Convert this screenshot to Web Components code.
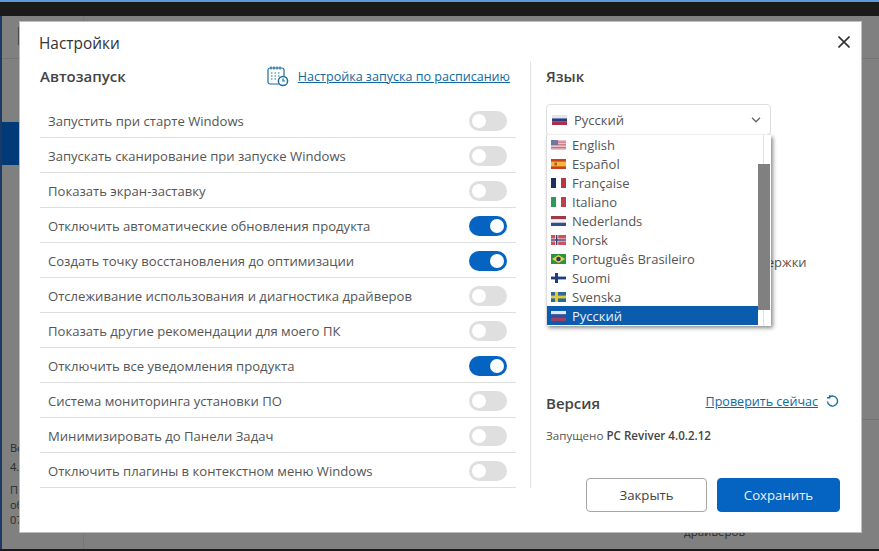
<!DOCTYPE html>
<html lang="ru">
<head>
<meta charset="utf-8">
<title>Настройки</title>
<style>
  html, body { margin: 0; height: 100%; overflow: hidden; }
  body { font-family: "Open Sans", "Noto Sans", sans-serif; color: #444; background: #808080; }
</style>
</head>
<body>
<settings-screen></settings-screen>

<script>
const FLAGS = {
  ru: '<rect width="15" height="3.4" fill="#e4e4ec"/><rect y="3.4" width="15" height="3.3" fill="#2b3a80"/><rect y="6.7" width="15" height="3.3" fill="#a8324a"/>',
  en: '<rect width="15" height="10" fill="#e8c4c8"/><rect y="1.5" width="15" height="1.2" fill="#c7707c"/><rect y="4.2" width="15" height="1.2" fill="#c7707c"/><rect y="7" width="15" height="1.4" fill="#c7707c"/><rect width="7" height="5" fill="#6d78a8"/>',
  es: '<rect width="15" height="10" fill="#c9401f"/><rect y="2.6" width="15" height="4.8" fill="#f0b93a"/><rect x="3.5" y="3.6" width="2.4" height="2.8" fill="#b5522a"/>',
  fr: '<rect width="5" height="10" fill="#1c2f5e"/><rect x="5" width="5" height="10" fill="#fff"/><rect x="10" width="5" height="10" fill="#b53645"/>',
  it: '<rect width="5" height="10" fill="#2f9a56"/><rect x="5" width="5" height="10" fill="#fff"/><rect x="10" width="5" height="10" fill="#b9414c"/>',
  nl: '<rect width="15" height="3.4" fill="#9a3a4c"/><rect y="3.4" width="15" height="3.3" fill="#f2f2f2"/><rect y="6.7" width="15" height="3.3" fill="#34508c"/>',
  no: '<rect width="15" height="10" fill="#d2505c"/><rect x="4.2" width="3" height="10" fill="#eee"/><rect y="3.5" width="15" height="3" fill="#eee"/><rect x="5" width="1.4" height="10" fill="#3a3f7a"/><rect y="4.3" width="15" height="1.4" fill="#3a3f7a"/>',
  br: '<rect width="15" height="10" fill="#2c9440"/><polygon points="7.5,1 14,5 7.5,9 1,5" fill="#e8d44a"/><circle cx="7.5" cy="5" r="2.3" fill="#27346e"/>',
  fi: '<rect width="15" height="10" fill="#fff"/><rect x="4" width="3" height="10" fill="#1f3d78"/><rect y="3.6" width="15" height="2.8" fill="#1f3d78"/>',
  se: '<rect width="15" height="10" fill="#2c6a94"/><rect x="4" width="3" height="10" fill="#e4c93e"/><rect y="3.6" width="15" height="2.8" fill="#e4c93e"/>',
  ruOn: '<rect width="15" height="3.4" fill="#dfe6f4"/><rect y="3.4" width="15" height="3.3" fill="#3a4a94"/><rect y="6.7" width="15" height="3.3" fill="#a04060"/>'
};

class FlagIcon extends HTMLElement {
  connectedCallback() {
    const root = this.shadowRoot || this.attachShadow({ mode: 'open' });
    const code = this.getAttribute('code');
    root.innerHTML = `
      <style>
        :host { display: block; width: 15px; height: 10px; flex: none; }
        svg { display: block; }
      </style>
      <svg width="15" height="10" viewBox="0 0 15 10">${FLAGS[code]}</svg>
    `;
  }
}
customElements.define('flag-icon', FlagIcon);

class ToggleSwitch extends HTMLElement {
  connectedCallback() {
    const root = this.attachShadow({ mode: 'open' });
    root.innerHTML = `
      <style>
        :host { display: block; width: 38px; height: 20px; flex: none; }
        .track {
          box-sizing: border-box;
          display: flex;
          align-items: center;
          width: 100%;
          height: 100%;
          padding: 0 3px;
          border-radius: 10px;
          background: #dfdfdf;
        }
        .knob { width: 14px; height: 14px; border-radius: 50%; background: #fff; }
        :host([on]) .track { background: #0563c1; justify-content: flex-end; }
      </style>
      <div class="track"><div class="knob"></div></div>
    `;
  }
}
customElements.define('toggle-switch', ToggleSwitch);

class SettingRow extends HTMLElement {
  connectedCallback() {
    const root = this.attachShadow({ mode: 'open' });
    const on = this.hasAttribute('on') ? 'on' : '';
    root.innerHTML = `
      <style>
        :host {
          box-sizing: border-box;
          display: flex;
          align-items: center;
          justify-content: space-between;
          height: 35px;
          padding: 1px 9px 0 8px;
          border-bottom: 1px solid #dfdfdf;
          font-size: 13.1px;
          color: #555;
        }
      </style>
      <slot></slot>
      <toggle-switch ${on}></toggle-switch>
    `;
  }
}
customElements.define('setting-row', SettingRow);

class LangSelect extends HTMLElement {
  connectedCallback() {
    const root = this.attachShadow({ mode: 'open' });
    const langs = [
      ['en', 'English'], ['es', 'Español'], ['fr', 'Française'], ['it', 'Italiano'],
      ['nl', 'Nederlands'], ['no', 'Norsk'], ['br', 'Português Brasileiro'],
      ['fi', 'Suomi'], ['se', 'Svenska'], ['ruOn', 'Русский']
    ];
    const items = langs.map(([code, name]) => `
      <div class="item ${code === 'ruOn' ? 'active' : ''}">
        <flag-icon code="${code}"></flag-icon><span>${name}</span>
      </div>`).join('');
    root.innerHTML = `
      <style>
        :host { display: block; position: relative; width: 225px; font-size: 13px; color: #555; }
        .box {
          box-sizing: border-box;
          display: flex;
          align-items: center;
          gap: 7px;
          height: 32px;
          padding: 0 9px 0 5px;
          background: #fff;
          border: 1px solid #dedede;
          border-radius: 4px;
        }
        .box span { flex: 1; }
        .list {
          position: absolute;
          z-index: 2;
          left: 0;
          top: 31px;
          box-sizing: border-box;
          display: flex;
          width: 225px;
          height: 191px;
          background: #fff;
          border-left: 1px solid #ddd;
          box-shadow: 2px 2px 4px rgba(0,0,0,.45);
        }
        .items { flex: 1; }
        .item {
          display: flex;
          align-items: center;
          gap: 6px;
          height: 19px;
          padding-left: 4px;
        }
        .item.active { background: #0b5cad; color: #e8f0fa; }
        .bar {
          width: 13px;
          padding-top: 29px;
          box-sizing: border-box;
          background: linear-gradient(90deg, #fff 5px, #e0e0e0 5px, #e0e0e0 6px, #fff 6px);
        }
        .thumb { width: 12px; height: 146px; background: #808080; }
      </style>
      <div class="box">
        <flag-icon code="ru"></flag-icon><span>Русский</span>
        <svg width="10" height="6" viewBox="0 0 10 6" fill="none" stroke="#666" stroke-width="1.3"><path d="M1 .8 5 4.8 9 .8"/></svg>
      </div>
      <div class="list">
        <div class="items">${items}</div>
        <div class="bar"><div class="thumb"></div></div>
      </div>
    `;
  }
}
customElements.define('lang-select', LangSelect);

class SettingsDialog extends HTMLElement {
  connectedCallback() {
    const root = this.attachShadow({ mode: 'open' });
    const rows = [
      ['Запустить при старте Windows', 0],
      ['Запускать сканирование при запуске Windows', 0],
      ['Показать экран-заставку', 0],
      ['Отключить автоматические обновления продукта', 1],
      ['Создать точку восстановления до оптимизации', 1],
      ['Отслеживание использования и диагностика драйверов', 0],
      ['Показать другие рекомендации для моего ПК', 0],
      ['Отключить все уведомления продукта', 1],
      ['Система мониторинга установки ПО', 0],
      ['Минимизировать до Панели Задач', 0],
      ['Отключить плагины в контекстном меню Windows', 0]
    ].map(([t, on]) => `<setting-row ${on ? 'on' : ''}>${t}</setting-row>`).join('');
    root.innerHTML = `
      <style>
        :host {
          position: absolute;
          left: 20px;
          top: 22px;
          box-sizing: border-box;
          display: flex;
          flex-direction: column;
          width: 841px;
          height: 510px;
          padding: 0 21px 0 20px;
          background: #fff;
          box-shadow: 0 0 0 1px #bdbdbd;
          font-family: "Open Sans", "Noto Sans", sans-serif;
        }
        header {
          display: flex;
          align-items: center;
          justify-content: space-between;
          height: 40px;
        }
        h1 { margin: 2px 0 0 -1px; font-size: 15.4px; font-weight: 400; color: #333; }
        .close { display: block; margin-right: -10px; }
        .cols { display: flex; height: 450px; }
        .left { box-sizing: border-box; width: 476px; }
        .divider { width: 1px; height: 426px; margin: 0 15px 0 14px; background: #e2e2e2; flex: none; }
        .right { position: relative; display: flex; flex-direction: column; flex: 1; }
        .head { display: flex; align-items: center; justify-content: space-between; height: 28px; }
        h2 { margin: 0; font-size: 15px; font-weight: 600; color: #444; }
        a { color: #10689e; text-decoration: underline; font-size: 12.55px; }
        .sched { display: flex; align-items: center; gap: 9px; margin-right: 6px; }
        .rows { margin-top: 13px; }
        lang-select { margin-top: 14px; }
        .hidden-text {
          margin: 117px 0 0 190px;
          font-size: 13px;
          color: #555;
        }
        .version { margin-top: auto; }
        .version .head { height: 26px; }
        .check { display: flex; align-items: center; gap: 8px; margin: 0 1px 4px 0; }
        .run { margin-top: 12px; font-size: 11.6px; line-height: 15px; color: #555; }
        .run b { font-weight: 600; color: #444; }
        footer { display: flex; justify-content: flex-end; gap: 10px; margin-top: 35px; }
        button {
          box-sizing: border-box;
          width: 121px;
          height: 34px;
          padding: 0;
          border-radius: 4px;
          border: 1px solid #a6a6a6;
          background: #fff;
          color: #444;
          font: 13.2px "Open Sans", "Noto Sans", sans-serif;
        }
        button.primary { width: 123px; background: #0563c1; border-color: #0563c1; color: #eaf2fb; }
      </style>
      <header>
        <h1>Настройки</h1>
        <svg class="close" width="12" height="12" viewBox="0 0 12 12" stroke="#333" stroke-width="1.6"><path d="M.5.5 11.5 11.5M11.5.5.5 11.5"/></svg>
      </header>
      <div class="cols">
        <section class="left">
          <div class="head">
            <h2>Автозапуск</h2>
            <div class="sched">
              <svg width="22" height="21" viewBox="0 0 22 21" fill="none" stroke="#1c6f9c" stroke-width="1.2">
                <path d="M12 18H3a2 2 0 0 1-2-2V4a2 2 0 0 1 2-2h12a2 2 0 0 1 2 2v6"/>
                <path d="M4 .6v3M7 .6v3M10 .6v3M13 .6v3" />
                <path d="M4 7h1.5M7.5 7H9M11 7h1.5M4 10h1.5M7.5 10H9M11 10h1.5M4 13h1.5M7.5 13H9" stroke-width="1.1"/>
                <circle cx="16" cy="15" r="4.6" stroke-width="1.5"/>
                <path d="M16 12.6V15h2.2"/>
              </svg>
              <a>Настройка запуска по расписанию</a>
            </div>
          </div>
          <div class="rows">${rows}</div>
        </section>
        <div class="divider"></div>
        <section class="right">
          <div class="head"><h2>Язык</h2></div>
          <lang-select></lang-select>
          <div class="hidden-text">поддержки</div>
          <div class="version">
            <div class="head">
              <h2>Версия</h2>
              <div class="check">
                <a>Проверить сейчас</a>
                <svg width="13" height="13" viewBox="0 0 13 13" fill="none" stroke="#1c6f9c" stroke-width="1.4"><path d="M3.3 2.2A5 5 0 1 1 1.5 6.5"/><path d="M3.6 .2v2.6H1" /></svg>
              </div>
            </div>
            <div class="run">Запущено <b>PC Reviver 4.0.2.12</b></div>
          </div>
          <footer>
            <button>Закрыть</button>
            <button class="primary">Сохранить</button>
          </footer>
        </section>
      </div>
    `;
  }
}
customElements.define('settings-dialog', SettingsDialog);

class SettingsScreen extends HTMLElement {
  connectedCallback() {
    const root = this.attachShadow({ mode: 'open' });
    root.innerHTML = `
      <style>
        :host {
          position: relative;
          display: flex;
          flex-direction: column;
          width: 879px;
          height: 551px;
          overflow: hidden;
          background: #808080;
          color: #2b2b2b;
          font-family: "Open Sans", "Noto Sans", sans-serif;
        }
        .strip { height: 2px; background: #5b9bd5; flex: none; }
        .titlebar { height: 14px; background: #1a1a1a; flex: none; }
        .body { flex: 1; display: flex; border-left: 2px solid #1c3a63; }
        .side { width: 81px; border-right: 1px solid #6f7590; display: flex; flex-direction: column; }
        .side .top { height: 42px; border-bottom: 1px solid #747474; flex: none; }
        .side .top i { display: block; width: 1px; height: 18px; margin: 11px 0 0 16px; background: #4a4a4a; }
        .side .sel { height: 43px; margin-top: 63px; background: #003a78; flex: none; }
        .side .info { margin: 273px 0 0 8px; font-size: 11px; line-height: 15px; white-space: nowrap; }
        .side .info p { margin: 0 0 6px; }
        .side .info p:first-child { line-height: 19px; }
        .main { flex: 1; position: relative; display: flex; flex-direction: column; align-items: flex-end; }
        .main .line { width: 40px; height: 42px; border-bottom: 1px solid #747474; flex: none; }
        .main .line + .line { height: 360px; }
        .main .cap { margin: 106px 134px 0 0; font-size: 11.5px; line-height: 12px; }
        .bottom { height: 2px; background: #1a1a1a; flex: none; }
      </style>
      <div class="strip"></div>
      <div class="titlebar"></div>
      <div class="body">
        <div class="side">
          <div class="top"><i></i></div>
          <div class="sel"></div>
          <div class="info"><p>Ве<br>4.</p><p>П<br>об<br>07</p></div>
        </div>
        <div class="main">
          <div class="line"></div>
          <div class="line"></div>
          <div class="cap">драйверов</div>
        </div>
      </div>
      <div class="bottom"></div>
      <settings-dialog></settings-dialog>
    `;
  }
}
customElements.define('settings-screen', SettingsScreen);
</script>
</body>
</html>
